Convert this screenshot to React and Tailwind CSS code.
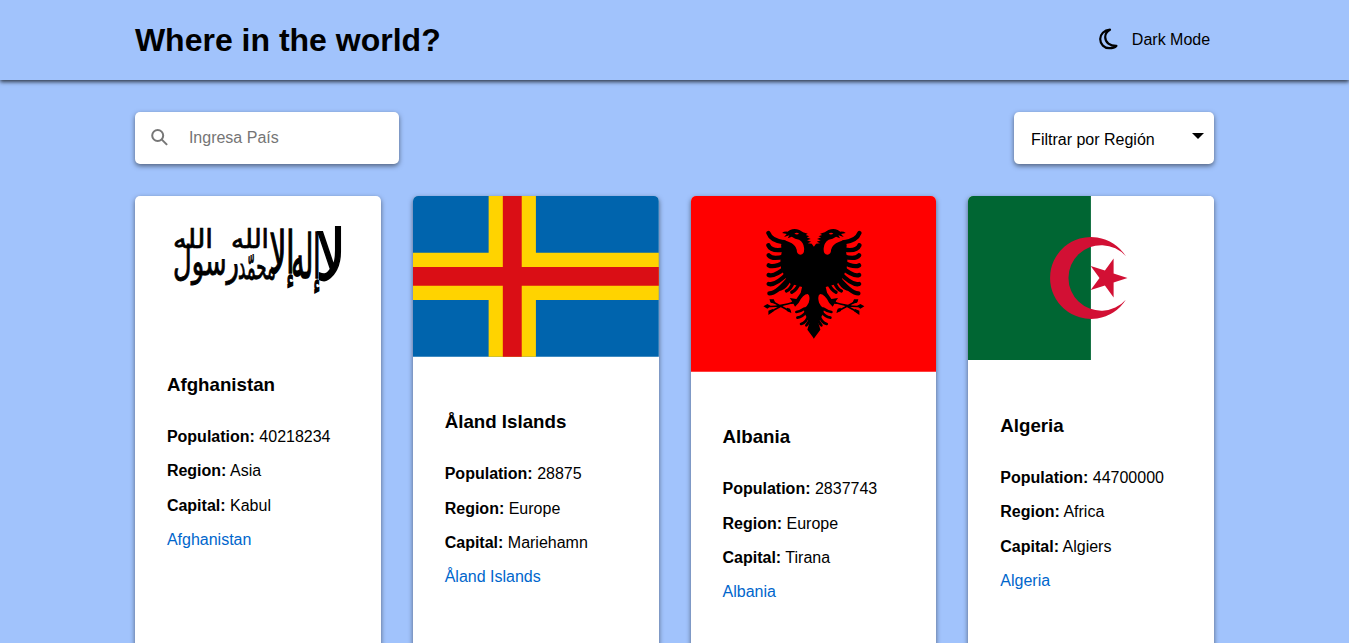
import React from "react";

function AfghanistanFlag() {
  return (
    <svg viewBox="0 0 246 123.5" className="block w-full" fill="#000" stroke="#000" strokeWidth="0.7" fontFamily="'DejaVu Sans', sans-serif" direction="rtl" textAnchor="middle">
      <g transform="translate(196 84) scale(1 2.6)"><text fontSize="27" textLength="30" lengthAdjust="spacingAndGlyphs">لا</text></g>
      <g transform="translate(171 82) scale(1 2.5)"><text fontSize="24" textLength="29" lengthAdjust="spacingAndGlyphs">إله</text></g>
      <g transform="translate(147 77) scale(1 2.4)"><text fontSize="24" textLength="25" lengthAdjust="spacingAndGlyphs">إلا</text></g>
      <g transform="translate(115 52) scale(1 1)"><text fontSize="26" textLength="38" lengthAdjust="spacingAndGlyphs">الله</text></g>
      <g transform="translate(122 83) scale(1 1.3)"><text fontSize="27" textLength="38" lengthAdjust="spacingAndGlyphs">محمّد</text></g>
      <g transform="translate(71 79) scale(1 1.35)"><text fontSize="30" textLength="66" lengthAdjust="spacingAndGlyphs">رسول</text></g>
      <g transform="translate(58 52) scale(1 1)"><text fontSize="26" textLength="40" lengthAdjust="spacingAndGlyphs">الله</text></g>
    </svg>
  );
}

function AlandFlag() {
  return (
    <svg viewBox="0 0 26 17" className="block w-full">
      <path fill="#0064ad" d="M0 0h26v17H0z" />
      <path fill="#ffd300" d="M8 0h5v17H8zM0 6h26v5H0z" />
      <path fill="#da0e15" d="M9.5 0h2v17h-2zM0 7.5h26v2H0z" />
    </svg>
  );
}

function EagleHalf() {
  return (
    <g>
      <path d="M191 96 L184 86 L172 85 L182 80 L170 76 L181 72 L169 67 L177 64 L166 60 L172 56 L158 52 L147 45 Q132 39 119 45 L111 50 Q101 49 95 54 L109 57 L101 66 L117 61 L112 70 L124 65 Q134 72 146 74 Q160 82 161 99 Q163 118 150 119 Q139 118 139 104 Q134 87 116 81 L99 74 L92 90 L94 110 L90 135 L92 160 L104 188 L120 206 L155 216 L151 233 L138 252 L118 249 L125 259 L120 267 L129 266 L134 275 L145 263 Q158 237 172 237 Q181 242 175 263 Q170 276 159 281 L165 300 L178 320 L171 344 L191 371 Z" />
      <path fill="#f00" d="M132 56q7-5 14 0q-6 5-14 0z" />
      <g fill="none" stroke="#000" strokeLinecap="round">
        <path strokeWidth="13" d="M54 54 Q62 77 101 82 M54 91 Q62 110 99 104 M55 121 Q66 135 102 124 M55 151 Q70 160 106 139 M55 180 Q70 187 108 156 M55 207 Q75 213 115 172 M57 235 Q80 235 121 184" />
        <path strokeWidth="10" d="M91 222 Q107 216 118 192 M108 228 Q121 223 130 199 M124 232 Q139 224 146 206" />
        <path strokeWidth="8" d="M138 291 Q151 289 162 281 M141 308 Q157 306 169 288 M152 327 Q168 323 174 301 M168 331 Q176 324 180 307" />
        <path strokeWidth="5" d="M51 274 Q79 277 133 261 M61 257 L119 289 M58 292 L98 270" />
      </g>
      <path d="M39 274 L51 267 L61 273 L51 281 Z M57 253 L70 253 L76 266 L61 263 Z M54 300 L54 287 L67 282 L70 289 Z M110 278 L119 281 L123 294 L109 288 Z" />
    </g>
  );
}

function AlbaniaFlag() {
  return (
    <svg viewBox="0 0 245.8 175.7" className="block w-full">
      <path fill="#f00" d="M0 0h245.8v175.7H0z" />
      <g transform="translate(59.4 19) scale(.3333)">
        <EagleHalf />
        <g transform="translate(381 0) scale(-1 1)"><EagleHalf /></g>
      </g>
    </svg>
  );
}

function AlgeriaFlag() {
  return (
    <svg viewBox="0 0 245.8 164.2" className="block w-full">
      <path fill="#fff" d="M0 0h245.8v164.2H0z" />
      <path fill="#063" d="M0 0h122.9v164.2H0z" />
      <path fill="#d21034" d="M157.8 60.2A41 41 0 1 0 157.8 103.7A32.8 32.8 0 1 1 157.8 60.2z" />
      <path fill="#d21034" d="M159.5 82L145.6 86.6V101.4L136.9 89.5L122.7 94.1L131.5 82L122.7 69.9L136.9 74.5L145.6 62.6V77.4z" />
    </svg>
  );
}

const countries = [
  { name: "Afghanistan", population: "40218234", region: "Asia", capital: "Kabul", Flag: AfghanistanFlag },
  { name: "Åland Islands", population: "28875", region: "Europe", capital: "Mariehamn", Flag: AlandFlag },
  { name: "Albania", population: "2837743", region: "Europe", capital: "Tirana", Flag: AlbaniaFlag },
  { name: "Algeria", population: "44700000", region: "Africa", capital: "Algiers", Flag: AlgeriaFlag },
];

function Field({ label, value }) {
  return <p><b>{label}:</b> {value}</p>;
}

function CountryCard({ country }) {
  const { Flag, name, population, region, capital } = country;
  return (
    <article className="h-[520px] overflow-hidden rounded-[5px] bg-white shadow-[0_2px_5px_rgba(0,0,0,0.5)]">
      <Flag />
      <div className="flex flex-col gap-4 px-8 pt-[54.3px] leading-[18.4px]">
        <h3 className="mb-[16.2px] text-[18.72px] leading-[22px] font-bold">{name}</h3>
        <Field label="Population" value={population} />
        <Field label="Region" value={region} />
        <Field label="Capital" value={capital} />
        <a href="#" className="text-[#0066cc]">{name}</a>
      </div>
    </article>
  );
}

export default function App() {
  return (
    <div className="h-screen overflow-hidden bg-[#a1c3fc] font-['Liberation_Sans',Arial,sans-serif] text-base text-black">
      <header className="h-20 px-[10%] shadow-[0_2px_4px_rgba(0,0,0,0.7)]">
        <div className="flex h-full items-center justify-between">
          <h1 className="text-[32px] leading-9 font-bold">Where in the world?</h1>
          <button className="flex items-center gap-3 pr-1 leading-[18px]">
            <svg width="22" height="24" viewBox="0 0 22 24" fill="none" stroke="currentColor" strokeWidth="2.2" strokeLinejoin="round">
              <path d="M12 1.7C6 2.2 2.2 6.2 2.2 11.1C2.2 16.3 6.3 20.2 11.2 20.2C14.4 20.2 16.9 19.5 18.4 17.9C12 18 7.2 14.6 7.2 8.9C7.2 5.8 9.2 3.2 12 1.7z" />
            </svg>
            Dark Mode
          </button>
        </div>
      </header>
      <main className="px-[10%] pt-8">
        <div className="mb-8 flex justify-between">
          <label className="flex h-[52px] w-[264px] items-center rounded-[5px] bg-white pl-4 shadow-[0_2px_5px_rgba(0,0,0,0.5)]">
            <svg width="17" height="17" viewBox="0 0 17 17" fill="none" stroke="#777" strokeWidth="2" className="mr-[21px] mb-0.5 shrink-0">
              <circle cx="6.7" cy="6.5" r="5.5" />
              <path d="M10.6 10.4l5.5 5.5" />
            </svg>
            <input placeholder="Ingresa País" className="w-[180px] bg-transparent outline-none placeholder:text-[#757575]" />
          </label>
          <button className="flex h-[52px] w-[200px] items-center justify-between rounded-[5px] bg-white pr-2.5 pl-[17px] shadow-[0_2px_5px_rgba(0,0,0,0.5)]">
            <span className="pt-[3px]">Filtrar por Región</span>
            <svg width="12" height="6" viewBox="0 0 12 6" className="mb-1"><path d="M0 0h12L6 6z" /></svg>
          </button>
        </div>
        <div className="grid grid-cols-4 gap-8">
          {countries.map((c) => <CountryCard key={c.name} country={c} />)}
        </div>
      </main>
    </div>
  );
}
